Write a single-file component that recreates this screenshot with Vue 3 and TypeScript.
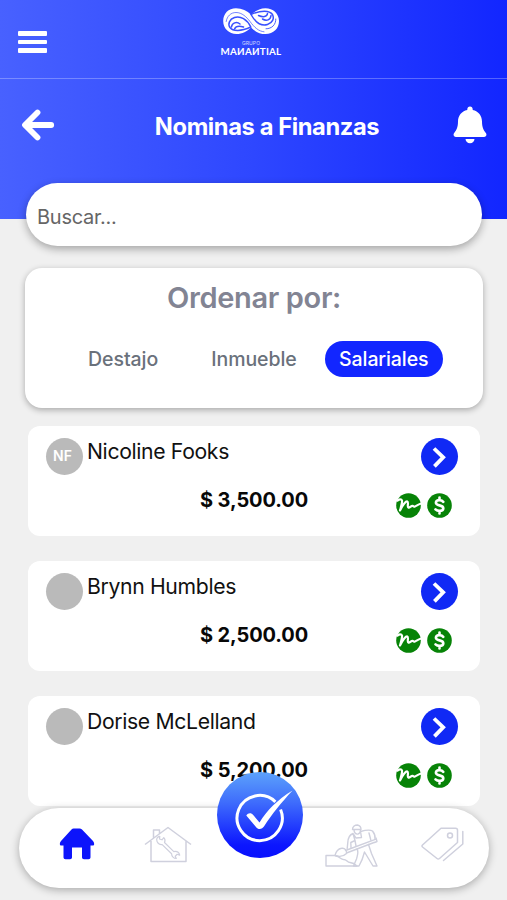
<script setup lang="ts">
import { ref } from 'vue'

interface Payroll {
  name: string
  initials: string
  amount: string
}

const filters: string[] = ['Destajo', 'Inmueble', 'Salariales']
const active = ref<string>('Salariales')
const search = ref<string>('')

const payrolls: Payroll[] = [
  { name: 'Nicoline Fooks', initials: 'NF', amount: '$ 3,500.00' },
  { name: 'Brynn Humbles', initials: '', amount: '$ 2,500.00' },
  { name: 'Dorise McLelland', initials: '', amount: '$ 5,200.00' },
]
</script>

<template>
  <div class="screen">
    <header class="header">
      <div class="topbar">
        <button class="icon-btn menu" aria-label="Menu">
          <span></span><span></span><span></span>
        </button>
        <div class="brand">
          <svg class="brand-mark" width="58" height="28" viewBox="0 0 58 28" fill="none" stroke-linecap="round">
            <path d="M14 1.200C6.500 1.200 1.200 6.500 1.200 14C1.200 21.500 7 27 14.500 27C20.500 27 25 24.500 29 20.500C33.500 25 38 27 43.500 27C51.500 27 57 21.500 57 14C57 6.500 51 1.200 43.500 1.200C37.500 1.200 33 4 29.200 7.800C25 3.500 20 1.200 14 1.200Z" fill="#fff" />
            <g stroke="#3950ff">
              <path d="M4.200 14.500C5 9 9 5.500 14 5.500C20 5.500 24.500 10 28 14.500C32.500 20.500 36.500 24.300 42 24.800" stroke-width=".7" />
              <path d="M28.800 20C25 12.500 18.500 8.500 12.500 10.500C7.500 12.200 5.500 17 8 20.500C11 24.500 19 24.500 28.800 20Z" fill="#fff" stroke-width="1.500" />
              <path d="M29 7.500C33.500 15.500 39.500 19.300 45.500 17.500C50.500 16 52.500 11.500 50.500 7.500C47.500 3 39 3 29 7.500Z" fill="#fff" stroke-width="1.500" />
              <path d="M9.500 20C10 16 14.500 14 18 17M12.500 22C14 18.500 18 18.800 21.500 20" stroke-width="1.500" />
              <path d="M49 8.500C48.500 13 44.500 14.500 40.500 12M45.500 6.500C45 10 41 10.500 36.500 8.500" stroke-width="1.500" />
              <path d="M53.800 12C54 17.500 50 21.800 44 21.800" stroke-width=".9" />
            </g>
          </svg>
          <span class="brand-small">GRUPO</span>
          <span class="brand-name">MAИAИTIAL</span>
        </div>
      </div>
      <div class="titlebar">
        <button class="icon-btn back" aria-label="Regresar">
          <svg width="34" height="34" viewBox="0 0 34 34" fill="none" stroke="#fff" stroke-width="5.800" stroke-linecap="round" stroke-linejoin="round">
            <path d="M16.500 4.500L4 17L16.500 29.500" />
            <path d="M5 17H30.200" />
          </svg>
        </button>
        <h1 class="title">Nominas a Finanzas</h1>
        <button class="icon-btn bell" aria-label="Notificaciones">
          <svg width="34" height="38" viewBox="0 0 34 38" fill="#fff">
            <path d="M17 .5C15.400 .5 14.300 1.700 14.300 3.300V3.900C8.500 5.100 5 9.800 5 15.600C5 21.300 3.600 24 1.200 27C-.2 28.800 .8 31 3 31H31C33.200 31 34.200 28.800 32.800 27C30.400 24 29 21.300 29 15.600C29 9.800 25.500 5.100 19.700 3.900V3.300C19.700 1.700 18.600 .5 17 .5Z" />
            <path d="M12.500 33H21.500C21.300 35.600 19.500 37.300 17 37.300C14.500 37.300 12.700 35.600 12.500 33Z" />
          </svg>
        </button>
      </div>
    </header>

    <main class="content">
      <input v-model="search" class="search" type="text" placeholder="Buscar..." />

      <section class="sorter">
        <h2 class="sorter-title">Ordenar por:</h2>
        <div class="chips">
          <button
            v-for="f in filters"
            :key="f"
            class="chip"
            :class="{ active: f === active }"
            @click="active = f"
          >{{ f }}</button>
        </div>
      </section>

      <ul class="list">
        <li v-for="p in payrolls" :key="p.name" class="card">
          <div class="card-top">
            <span class="avatar">{{ p.initials }}</span>
            <span class="name">{{ p.name }}</span>
            <button class="go" aria-label="Ver detalle">
              <svg width="37" height="37" viewBox="0 0 37 37" fill="none" stroke="#fff" stroke-width="3.800" stroke-linejoin="miter">
                <path d="M13 10.500L22.200 19.400L13.400 28.400" />
              </svg>
            </button>
          </div>
          <div class="card-bottom">
            <span class="amount">{{ p.amount }}</span>
            <div class="badges">
              <svg width="25" height="25" viewBox="0 0 25 25" fill="none">
                <circle cx="12.500" cy="12.500" r="12.300" fill="#078307" />
                <path d="M1.500 7.500C3.500 6 5.500 6 6 7.500C6.500 9.500 5 13.500 4 17.500C6.500 12.500 9.800 8 11.300 8.500C13 9.200 10.800 14 12.300 14.600C13.800 15.100 15.200 12.600 16.500 12.800C17.800 13 17.200 14 18.600 13.600C20.500 13 22 11.500 24.500 10.800" stroke="#fff" stroke-width="2.200" stroke-linecap="round" stroke-linejoin="round" />
              </svg>
              <svg width="25" height="25" viewBox="0 0 25 25" fill="none">
                <circle cx="12.500" cy="12.500" r="12.300" fill="#078307" />
                <path d="M16.300 8.800C15.200 7.600 13.900 7.100 12.400 7.100C10.200 7.100 8.900 8.200 8.900 9.800C8.900 13.300 16.300 11.400 16.300 15.200C16.300 16.900 14.700 17.900 12.600 17.900C10.900 17.900 9.500 17.400 8.500 16.400M12.500 4.600V7.200M12.500 17.800V20.400" stroke="#fff" stroke-width="2.600" stroke-linecap="round" />
              </svg>
            </div>
          </div>
        </li>
      </ul>
    </main>

    <nav class="tabbar">
      <a class="tab home" aria-label="Inicio">
        <svg width="36" height="32" viewBox="0 0 36 32" fill="#0d14fb">
          <path d="M14.500 .5H20.500Q22 .5 23 1.500L34 13Q35.200 14.500 35.200 16Q35.200 17.500 34 17.500H31.500V29.500Q31.500 31.200 29.500 31.200H25Q23 31.200 23 29.500V19.500H13V29.500Q13 31.200 11 31.200H6.500Q4.500 31.200 4.500 29.500V17.500H2Q.8 17.500 .8 16Q.8 14.500 2 13L12.500 1.500Q13.500 .5 14.500 .5Z" />
        </svg>
      </a>
      <a class="tab repair" aria-label="Mantenimiento">
        <svg width="48" height="37" viewBox="0 0 48 37" fill="none" stroke="#cfd0dd" stroke-width="1.500" stroke-linejoin="round">
          <path d="M1 18.500L24 1.500L47 18.500M7 15V35.500H42V15M9.500 11.800V4H15.500V7.500" />
          <path d="M13 15.200C12 12.500 13.500 10.500 15.800 10.300L15.500 13L18 13.800L19.800 11.700C21.500 13.500 21 15.500 20.500 16.500L29.800 25.600C32.500 25.100 35 26.500 35.700 29.200L33.200 28.300L31.200 30.200L32.300 32.500C29.800 32.500 27.500 30.500 27.600 27.800L18.200 18.600C16.500 18.800 14 17.700 13 15.200Z" stroke-width="1.200" />
        </svg>
      </a>
      <a class="tab worker" aria-label="Destajos">
        <svg width="53" height="43" viewBox="0 0 53 43" fill="none" stroke="#cfd0dd" stroke-width="1.400" stroke-linejoin="round" stroke-linecap="round">
          <path d="M1 31.500V42H32C30 40 28 38.700 25 38.500C22 38.500 22 35.500 18.500 35.500C15.500 35.300 15.800 33 10 31.500Z" />
          <path d="M10 31.500C11 27.500 12.500 25 16.500 24.300C20 23.500 22 27 21.500 29.500C18 33 13 32.500 10 31.500ZM20.500 26.500L51 15.200M21.500 29L49 18.500M51 14L52 17.500L49.500 18.500" />
          <path d="M27.500 5.500C27.500 2.500 30 1 32.500 1C35 1.500 36 3 36 5.500ZM29 5.500C29 8.500 30.500 10.500 33 10C35 9.500 35.600 8 35.500 5.500" />
          <path d="M28 9.500C24 11 23 14.500 22.800 18.500L22.200 24.500M28 9.500L30 16.500L25.800 18.500L26 23.500M28.500 10L31 14L36.500 13.500L35.500 7.500C39 6.500 44.500 5 47.500 7C49.500 9.500 50.500 12 50 15M44 9L45.800 16M30 16.500L31 22" />
          <path d="M32 25C34 28 32.500 31 31.500 35L28.500 42H34C37 37 38 34 39.500 28L48 42H52L46.500 29.500L43.500 20.500" />
        </svg>
      </a>
      <a class="tab tags" aria-label="Etiquetas">
        <svg width="43" height="35" viewBox="0 0 43 35" fill="none" stroke="#cfd0dd" stroke-width="1.500" stroke-linejoin="round" stroke-linecap="round">
          <path d="M20 1.200H34.500Q36.500 1.200 36.500 3.200V15.500L18.500 31.500Q17.200 32.500 16 31.500L1.500 20Q.5 19 1.500 18Z" />
          <circle cx="29" cy="8.500" r="2.500" />
          <path d="M41.800 4.500V17L22.500 33.500" />
        </svg>
      </a>
      <button class="fab" aria-label="Aprobar">
        <svg width="86" height="86" viewBox="0 0 86 86" fill="none">
          <path d="M58.400 29.800A22.600 22.600 0 1 0 63.600 37.500" stroke="#fff" stroke-width="3" />
          <path d="M29.300 43.500C31 40.800 34.300 40.500 36.200 43L42.500 50.500C50 38.500 60 28 75.500 18.500C64 31 55 42 47.300 54C45 57.600 41.300 58 39 55Z" fill="#fff" />
        </svg>
      </button>
    </nav>
  </div>
</template>

<style>
html,
body {
  margin: 0;
  height: 100%;
  overflow: hidden;
  background: #f0f0f0;
}
</style>

<style scoped>
.screen {
  position: relative;
  height: 900px;
  overflow: hidden;
  background: #f0f0f0;
  font-family: Inter, "Liberation Sans", sans-serif;
}
button {
  font-family: inherit;
  border: 0;
  padding: 0;
  background: none;
}
svg {
  display: block;
}
.header {
  height: 219px;
  background: linear-gradient(90deg, #4861ff 0%, #2e47ff 50%, #1226ff 100%);
}
.topbar {
  display: grid;
  grid-template-columns: 1fr auto 1fr;
  height: 78px;
  border-bottom: 1px solid rgba(255, 255, 255, 0.28);
}
.menu {
  display: flex;
  flex-direction: column;
  justify-self: start;
  gap: 4px;
  margin: 31px 0 0 18px;
}
.menu span {
  width: 29px;
  height: 4.500px;
  border-radius: 1px;
  background: #fff;
}
.brand {
  display: flex;
  flex-direction: column;
  align-items: center;
  margin-right: 5px;
  padding-top: 7px;
  color: #fff;
}
.brand-small {
  margin-top: 5px;
  font-size: 5px;
  line-height: 6px;
  letter-spacing: 0.1px;
  opacity: 0.75;
}
.brand-name {
  font-family: Lato, sans-serif;
  font-size: 9.800px;
  font-weight: 700;
  line-height: 11px;
  letter-spacing: 0.25px;
}
.titlebar {
  display: flex;
  align-items: center;
  justify-content: space-between;
  height: 92px;
  padding: 0 20px 0 21px;
}
.title {
  margin: 3px 0 0 26px;
  color: #fff;
  font-size: 23.700px;
  font-weight: 700;
  line-height: 30px;
  letter-spacing: -0.4px;
}
.bell {
  margin-top: -1px;
}
.content {
  display: flex;
  flex-direction: column;
  margin-top: -36px;
  padding: 0 24px 0 25px;
}
.search {
  box-sizing: border-box;
  height: 63px;
  margin: 0 1px;
  padding: 4px 11px 0;
  border: 0;
  border-radius: 32px;
  outline: 0;
  background: #fff;
  box-shadow: 0 3px 8px rgba(0, 0, 0, 0.32);
  font-family: inherit;
  font-size: 20px;
  letter-spacing: -0.25px;
}
.search::placeholder {
  color: #666;
  opacity: 1;
}
.sorter {
  box-sizing: border-box;
  height: 140px;
  margin-top: 22px;
  padding-top: 11px;
  border-radius: 17px;
  background: #fff;
  box-shadow: 0 2px 6px rgba(0, 0, 0, 0.3);
}
.sorter-title {
  margin: 0;
  color: #828493;
  font-size: 29px;
  font-weight: 600;
  line-height: 38px;
  letter-spacing: -0.35px;
  text-align: center;
}
.chips {
  display: flex;
  gap: 25px;
  margin: 24px 0 0 49px;
}
.chip {
  height: 36px;
  padding: 0 14px;
  border-radius: 18px;
  color: #6a717b;
  font-size: 19.500px;
  font-weight: 500;
  letter-spacing: -0.05px;
}
.chip.active {
  width: 118px;
  margin-left: -11px;
  padding: 0;
  background: #1226ff;
  color: #fff;
  letter-spacing: -0.1px;
}
.list {
  display: flex;
  flex-direction: column;
  gap: 25px;
  margin: 18px 3px 0;
  padding: 0;
  list-style: none;
}
.card {
  box-sizing: border-box;
  height: 110px;
  padding: 12px 22px 0 18px;
  border-radius: 12px;
  background: #fff;
}
.card-top {
  display: flex;
  height: 37px;
}
.avatar {
  width: 37px;
  height: 37px;
  border-radius: 50%;
  background: #bababa;
  color: #fff;
  font-size: 14px;
  font-weight: 600;
  line-height: 36px;
  text-align: center;
  text-indent: -4px;
}
.name {
  flex: 1;
  margin-left: 4px;
  color: #111;
  font-size: 21.200px;
  line-height: 27px;
  letter-spacing: -0.35px;
}
.go {
  width: 37px;
  height: 37px;
  border-radius: 50%;
  background: #1029f5;
}
.card-bottom {
  display: grid;
  grid-template-columns: 1fr auto 1fr;
  padding: 11px 6px 0 10px;
}
.amount {
  grid-column: 2;
  color: #080808;
  font-size: 20px;
  font-weight: 700;
  line-height: 28px;
  letter-spacing: -0.1px;
}
.badges {
  display: flex;
  justify-content: flex-end;
  gap: 6px;
  margin-top: 7px;
}
.tabbar {
  position: absolute;
  left: 19px;
  top: 808px;
  display: flex;
  box-sizing: border-box;
  width: 470px;
  height: 80px;
  padding-left: 40px;
  border-radius: 40px;
  background: #fff;
  box-shadow: 0 2px 8px rgba(0, 0, 0, 0.3);
}
.tab.home {
  padding-top: 20px;
}
.tab.repair {
  margin-left: 49px;
  padding-top: 18px;
}
.tab.worker {
  margin-left: 133px;
  padding-top: 16px;
}
.tab.tags {
  margin-left: 43px;
  padding-top: 19px;
}
.fab {
  position: absolute;
  left: 198px;
  top: -36px;
  width: 86px;
  height: 86px;
  border-radius: 50%;
  background: linear-gradient(180deg, #5ca2fb 0%, #3f6dfc 35%, #0c16fe 85%, #0810fe 100%);
}
</style>
